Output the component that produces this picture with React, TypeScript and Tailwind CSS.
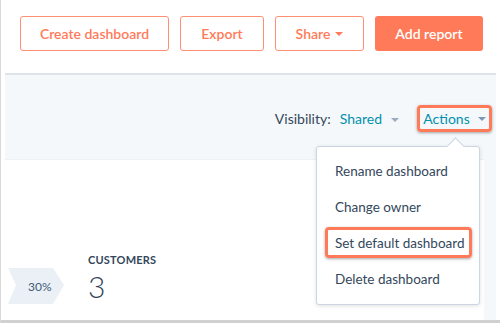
import React from "react";

const font = { fontFamily: "Lato, 'Open Sans', sans-serif" };

function Caret({ color, w = 9, h = 5 }: { color: string; w?: number; h?: number }) {
  return (
    <svg width={w} height={h} viewBox={`0 0 ${w} ${h}`} className="inline-block">
      <path d={`M0 0 L${w} 0 L${w / 2} ${h} Z`} fill={color} />
    </svg>
  );
}

export default function App() {
  return (
    <div
      className="relative w-[500px] h-[323px] bg-white border-l border-[#d9d9d9] overflow-hidden flex flex-col"
      style={font}
    >
      {/* top button row */}
      <div className="h-[73px] flex items-start pt-[16px] pl-[19px] gap-[11px] shrink-0">
        <button className="h-[35px] w-[149px] rounded-[3px] border border-[#ff8f73] text-[#ff7a59] text-[14px] font-semibold flex items-center justify-center">
          Create dashboard
        </button>
        <button className="h-[35px] w-[84px] rounded-[3px] border border-[#ff8f73] text-[#ff7a59] text-[14px] font-semibold flex items-center justify-center">
          Export
        </button>
        <button className="h-[35px] w-[89px] rounded-[3px] border border-[#ff8f73] text-[#ff7a59] text-[14px] font-semibold flex items-center justify-center gap-[5px]">
          Share <Caret color="#ff7a59" w={8} h={4} />
        </button>
        <button className="h-[35px] w-[108px] rounded-[3px] bg-[#ff7a59] text-white text-[14px] font-semibold flex items-center justify-center">
          Add report
        </button>
      </div>

      {/* main area */}
      <div className="flex-1 ml-[4px] w-[491px] bg-[#f5f8fa] border-t-2 border-[#dfe3eb] flex flex-col">
        <div className="h-[84px] flex items-start justify-end pt-[30px] pr-[4px] text-[14px]">
          <div className="flex items-center h-[27px] text-[#33475b]">
            <span>Visibility:</span>
            <span className="ml-[9px] text-[#0091ae]">Shared</span>
            <span className="ml-[9px] mr-[18px]">
              <Caret color="#99acc2" w={8} h={4} />
            </span>
          </div>
          <div className="h-[27px] w-[75px] rounded-[4px] border-[3px] border-[#ff7a59] shadow-[0_1px_3px_rgba(0,0,0,0.35)] flex items-center justify-center gap-[8px] text-[#0091ae]">
            <span>Actions</span>
            <Caret color="#7c98b6" w={8} h={4} />
          </div>
        </div>
        <div className="flex-1 w-[479px] bg-white border-t border-[#eef1f5] relative">
          <div className="absolute left-[3px] top-[108px] flex items-end">
            <svg width="56" height="36" viewBox="0 0 56 36">
              <path d="M0 0 L45 0 L56 17 L45 36 L0 36 L8 17 Z" fill="#eaf0f6" />
              <text x="20" y="23" fontSize="12" fill="#425b76" style={font}>30%</text>
            </svg>
          </div>
          <div className="absolute left-[83px] top-[94px] text-[#33475b]">
            <div className="text-[11px] font-bold tracking-[0.2px] leading-none">CUSTOMERS</div>
            <div className="text-[30px] font-light leading-none mt-[6px]">3</div>
          </div>
        </div>
      </div>
      <div className="h-[3px] bg-[#d0d0d0] shrink-0" />

      {/* dropdown */}
      <div className="absolute left-[315px] top-[146px] w-[164px] h-[159px] bg-white border border-[#cbd6e2] rounded-[3px] shadow-[0_1px_4px_rgba(0,0,0,0.12)] text-[13.5px] text-[#33475b]">
        <div className="absolute -top-[7px] left-[132px] w-[13px] h-[13px] bg-white border-l border-t border-[#cbd6e2] rotate-45" />
        <div className="flex flex-col pt-[6px] pl-[18px]">
          <div className="h-[36px] flex items-center">Rename dashboard</div>
          <div className="h-[36px] flex items-center">Change owner</div>
          <div className="h-[36px] flex items-center">Set default dashboard</div>
          <div className="h-[36px] flex items-center">Delete dashboard</div>
        </div>
        <div className="absolute left-[8px] top-[80px] w-[147px] h-[31px] rounded-[4px] border-[3px] border-[#ff7a59] shadow-[0_1px_3px_rgba(0,0,0,0.35)]" />
      </div>
    </div>
  );
}
